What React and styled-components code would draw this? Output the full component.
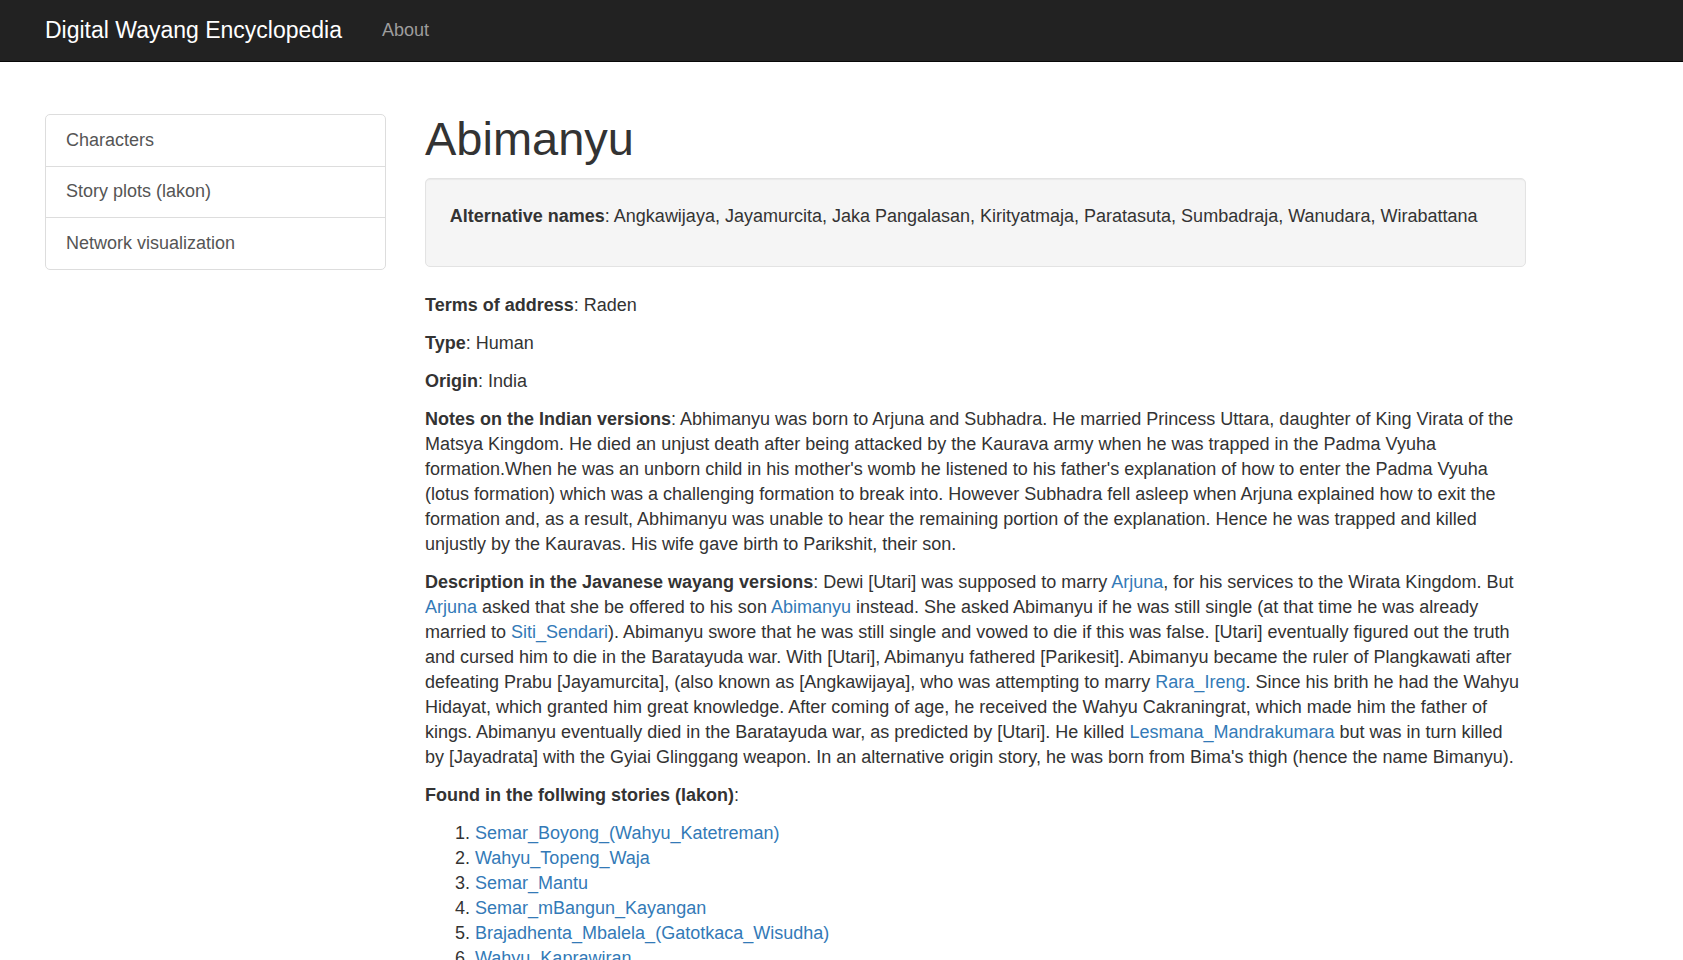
import React from 'react';
import styled, { createGlobalStyle } from "styled-components";

const GlobalStyle = createGlobalStyle`
  html, body {
    margin: 0;
    padding: 0;
    background: #fff;
  }
  body {
    font-family: "Liberation Sans", Arial, sans-serif;
    font-size: 18px;
    line-height: 25px;
    color: #333;
  }
`;

const Navbar = styled.nav`
  height: 61px;
  background-color: #222;
  border-bottom: 1.25px solid #080808;
  display: flex;
  align-items: center;
  padding-left: 45px;
`;

const Brand = styled.a`
  color: #fff;
  font-size: 23px;
  line-height: 25px;
  text-decoration: none;
  margin-right: 40px;
`;

const NavLink = styled.a`
  color: #9d9d9d;
  font-size: 18px;
  line-height: 25px;
  text-decoration: none;
`;

const Layout = styled.div`
  display: flex;
  align-items: flex-start;
  padding-left: 45px;
`;

const Sidebar = styled.div`
  width: 341px;
  margin-top: 52px;
  border: 1.25px solid #ddd;
  border-radius: 5px;
  box-sizing: border-box;
`;

const SideItem = styled.a`
  display: block;
  padding: 12.75px 20px;
  color: #555;
  text-decoration: none;
  line-height: 25px;
  border-top: ${props => props.first ? 'none' : '1.25px solid #ddd'};
`;

const Main = styled.div`
  width: 1101px;
  margin-left: 39px;
`;

const Title = styled.h1`
  font-size: 47px;
  line-height: 49.5px;
  font-weight: 500;
  margin: 52px 0 14.5px;
  color: #333;
`;

const Well = styled.div`
  background-color: #f5f5f5;
  border: 1.25px solid #e3e3e3;
  border-radius: 5px;
  padding: 24.5px 23.75px;
  margin-bottom: 26px;
  box-shadow: inset 0 1px 1px rgba(0, 0, 0, 0.05);
`;

const Para = styled.p`
  margin: 0 0 13px;
`;

const Label = styled.strong`
  font-weight: bold;
`;

const Link = styled.a`
  color: #337ab7;
  text-decoration: none;
`;

const StoryList = styled.ol`
  margin: 0 0 12.5px;
  padding-left: 50px;
`;

const stories = [
  'Semar_Boyong_(Wahyu_Katetreman)',
  'Wahyu_Topeng_Waja',
  'Semar_Mantu',
  'Semar_mBangun_Kayangan',
  'Brajadhenta_Mbalela_(Gatotkaca_Wisudha)',
  'Wahyu_Kaprawiran',
];

const App = () => {
  return (
    <>
      <GlobalStyle />
      <Navbar>
        <Brand href="#">Digital Wayang Encyclopedia</Brand>
        <NavLink href="#">About</NavLink>
      </Navbar>
      <Layout>
        <Sidebar>
          <SideItem href="#" first>Characters</SideItem>
          <SideItem href="#">Story plots (lakon)</SideItem>
          <SideItem href="#">Network visualization</SideItem>
        </Sidebar>
        <Main>
          <Title>Abimanyu</Title>
          <Well>
            <Para>
              <Label>Alternative names</Label>: Angkawijaya, Jayamurcita, Jaka Pangalasan, Kirityatmaja, Paratasuta, Sumbadraja, Wanudara, Wirabattana
            </Para>
          </Well>
          <Para><Label>Terms of address</Label>: Raden</Para>
          <Para><Label>Type</Label>: Human</Para>
          <Para><Label>Origin</Label>: India</Para>
          <Para>
            <Label>Notes on the Indian versions</Label>: Abhimanyu was born to Arjuna and Subhadra. He married Princess Uttara, daughter of King Virata of the Matsya Kingdom. He died an unjust death after being attacked by the Kaurava army when he was trapped in the Padma Vyuha formation.When he was an unborn child in his mother's womb he listened to his father's explanation of how to enter the Padma Vyuha (lotus formation) which was a challenging formation to break into. However Subhadra fell asleep when Arjuna explained how to exit the formation and, as a result, Abhimanyu was unable to hear the remaining portion of the explanation. Hence he was trapped and killed unjustly by the Kauravas. His wife gave birth to Parikshit, their son.
          </Para>
          <Para>
            <Label>Description in the Javanese wayang versions</Label>: Dewi [Utari] was supposed to marry <Link href="#">Arjuna</Link>, for his services to the Wirata Kingdom. But <Link href="#">Arjuna</Link> asked that she be offered to his son <Link href="#">Abimanyu</Link> instead. She asked Abimanyu if he was still single (at that time he was already married to <Link href="#">Siti_Sendari</Link>). Abimanyu swore that he was still single and vowed to die if this was false. [Utari] eventually figured out the truth and cursed him to die in the Baratayuda war. With [Utari], Abimanyu fathered [Parikesit]. Abimanyu became the ruler of Plangkawati after defeating Prabu [Jayamurcita], (also known as [Angkawijaya], who was attempting to marry <Link href="#">Rara_Ireng</Link>. Since his brith he had the Wahyu Hidayat, which granted him great knowledge. After coming of age, he received the Wahyu Cakraningrat, which made him the father of kings. Abimanyu eventually died in the Baratayuda war, as predicted by [Utari]. He killed <Link href="#">Lesmana_Mandrakumara</Link> but was in turn killed by [Jayadrata] with the Gyiai Glinggang weapon. In an alternative origin story, he was born from Bima's thigh (hence the name Bimanyu).
          </Para>
          <Para><Label>Found in the follwing stories (lakon)</Label>:</Para>
          <StoryList>
            {stories.map(s => (
              <li key={s}><Link href="#">{s}</Link></li>
            ))}
          </StoryList>
        </Main>
      </Layout>
    </>
  );
};

export default App;
